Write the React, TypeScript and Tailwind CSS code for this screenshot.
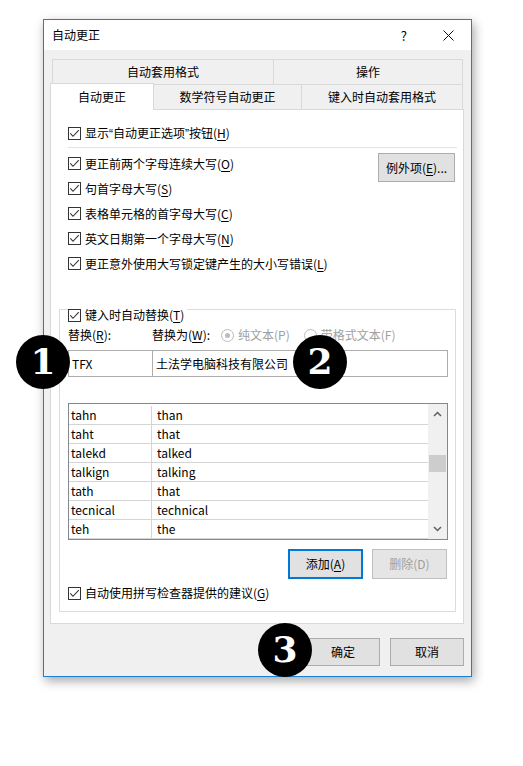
import type { ReactNode } from 'react'

const rows = [
  ['tahn', 'than'],
  ['taht', 'that'],
  ['talekd', 'talked'],
  ['talkign', 'talking'],
  ['tath', 'that'],
  ['tecnical', 'technical'],
  ['teh', 'the'],
]

function Check({ children, h = 'h-[18px]' }: { children: ReactNode; h?: string }) {
  return (
    <div className={`flex items-center ${h}`}>
      <span className="w-[13px] h-[13px] border border-[#333333] bg-white flex items-center justify-center shrink-0">
        <svg width="11" height="11" viewBox="0 0 11 11">
          <path d="M1.3 5.4 L4 8.3 L9.8 2.2" fill="none" stroke="#333333" strokeWidth="1.1" />
        </svg>
      </span>
      <span className="ml-[4px] whitespace-nowrap">{children}</span>
    </div>
  )
}

function Key({ k }: { k: string }) {
  return <>(<u className="underline-offset-2">{k}</u>)</>
}

function Radio({ on }: { on?: boolean }) {
  return (
    <span className="w-[13px] h-[13px] rounded-full border border-[#bcbcbc] bg-white flex items-center justify-center shrink-0">
      {on && <span className="w-[5px] h-[5px] rounded-full bg-[#bcbcbc]" />}
    </span>
  )
}

function Badge({ n, pos }: { n: string; pos: string }) {
  return (
    <div className={`absolute ${pos} w-[54px] h-[54px] rounded-full bg-black flex items-center justify-center`}>
      <span className="text-white font-['DejaVu_Serif',serif] font-bold text-[36px] leading-none -mt-[2px]">{n}</span>
    </div>
  )
}

export default function App() {
  return (
    <div className="relative w-[523px] h-[766px] bg-white pt-[19px] pl-[43px] font-['Noto_Sans_CJK_SC','Noto_Sans',sans-serif] text-[12px] text-black leading-none">
      <div className="w-[429px] h-[658px] border border-[#1c7fd6] bg-[#f0f0f0] shadow-[2px_4px_10px_rgba(0,0,0,0.35)] flex flex-col">
        {/* title bar */}
        <div className="h-[30px] bg-white flex items-center pl-[8px]">
          <span>自动更正</span>
          <span className="ml-auto text-[13px]">?</span>
          <span className="ml-[36px] mr-[17px]">
            <svg width="11" height="11" viewBox="0 0 11 11">
              <path d="M0.5 0.5 L10.5 10.5 M10.5 0.5 L0.5 10.5" stroke="#111" strokeWidth="1" />
            </svg>
          </span>
        </div>

        {/* tabs */}
        <div className="mt-[9px] ml-[8px] flex h-[25px] w-[411px]">
          <div className="w-[222px] border-t border-l border-r border-[#d9d9d9] flex items-center justify-center">自动套用格式</div>
          <div className="flex-1 border-t border-r border-[#d9d9d9] flex items-center justify-center">操作</div>
        </div>
        <div className="ml-[6px] flex items-start h-[25px] w-[413px]">
          <div className="relative z-10 -mt-px h-[27px] w-[104px] bg-white border-l border-t border-r border-[#d9d9d9] flex items-center justify-center">自动更正</div>
          <div className="h-[25px] w-[148px] border-t border-r border-[#d9d9d9] flex items-center justify-center">数学符号自动更正</div>
          <div className="h-[25px] flex-1 border-t border-r border-[#d9d9d9] flex items-center justify-center">键入时自动套用格式</div>
        </div>

        {/* panel */}
        <div className="ml-[6px] w-[414px] h-[515px] bg-white border border-[#d9d9d9] pt-[13px]">
          <div className="ml-[17px]">
            <Check h="h-[20px]">
              显示<span className="font-['Liberation_Sans',sans-serif]">“</span>自动更正选项<span className="font-['Liberation_Sans',sans-serif]">”</span>按钮<Key k="H" />
            </Check>
          </div>
          <div className="mt-[4px] ml-[17px] mr-[6px] h-px bg-[#e3e3e3]" />

          <div className="mt-[3px] flex">
            <div className="ml-[17px] flex flex-col">
              {[
                ['更正前两个字母连续大写', 'O'],
                ['句首字母大写', 'S'],
                ['表格单元格的首字母大写', 'C'],
                ['英文日期第一个字母大写', 'N'],
                ['更正意外使用大写锁定键产生的大小写错误', 'L'],
              ].map(([t, k]) => (
                <Check key={t} h="h-[25px]">
                  {t}<Key k={k} />
                </Check>
              ))}
            </div>
            <button className="ml-auto mr-[8px] mt-[2px] w-[77px] h-[29px] border border-[#adadad] bg-[#e1e1e1] flex items-center justify-center">
              例外项<Key k="E" />...
            </button>
          </div>

          {/* replace group */}
          <div className="mt-[33px] ml-[8px] mr-[7px] border border-[#dcdcdc] pb-[9px]">
            <div className="-mt-[2px] ml-[8px] w-fit bg-white pr-[3px]">
              <Check h="h-[14px]">
                键入时自动替换<Key k="T" />
              </Check>
            </div>
            <div className="mt-[4px] ml-[8px] h-[18px] flex items-center">
              <span className="w-[84px]">替换<Key k="R" />:</span>
              <span>替换为<Key k="W" />:</span>
              <span className="ml-[11px]"><Radio on /></span>
              <span className="ml-[4px] text-[#a0a0a0]">纯文本(P)</span>
              <span className="ml-[14px]"><Radio /></span>
              <span className="ml-[4px] text-[#a0a0a0]">带格式文本(F)</span>
            </div>
            <div className="mt-[6px] ml-[8px] mr-[7px] h-[27px] flex">
              <div className="w-[85px] border border-[#adadad] pl-[3px] flex items-center">TFX</div>
              <div className="flex-1 border border-l-0 border-[#adadad] pl-[3px] flex items-center">土法学电脑科技有限公司</div>
            </div>

            <div className="mt-[26px] ml-[8px] mr-[7px] h-[137px] border border-[#828790] flex">
              <div className="flex-1 pt-[2px]">
                {rows.map(([a, b], i) => (
                  <div key={i} className="h-[19px] flex border-b border-[#d5d5d5]">
                    <div className="w-[83px] border-r border-[#d5d5d5] pl-[2px] flex items-center">{a}</div>
                    <div className="pl-[5px] flex items-center">{b}</div>
                  </div>
                ))}
              </div>
              <div className="w-[19px] bg-[#f0f0f0] flex flex-col">
                <div className="h-[20px] flex items-center justify-center">
                  <svg width="9" height="6" viewBox="0 0 9 6">
                    <path d="M1 5 L4.5 1.5 L8 5" fill="none" stroke="#606060" strokeWidth="1.5" />
                  </svg>
                </div>
                <div className="mt-[31px] mx-[1px] h-[17px] bg-[#cdcdcd]" />
                <div className="flex-1" />
                <div className="h-[20px] flex items-center justify-center">
                  <svg width="9" height="6" viewBox="0 0 9 6">
                    <path d="M1 1 L4.5 4.5 L8 1" fill="none" stroke="#606060" strokeWidth="1.5" />
                  </svg>
                </div>
              </div>
            </div>

            <div className="mt-[9px] mr-[8px] flex justify-end gap-[9px]">
              <button className="w-[75px] h-[30px] border-2 border-[#0078d7] bg-[#e1e1e1] flex items-center justify-center">
                添加<Key k="A" />
              </button>
              <button className="w-[75px] h-[30px] border border-[#bfbfbf] bg-[#e5e5e5] text-[#a0a0a0] flex items-center justify-center">
                删除(D)
              </button>
            </div>

            <div className="mt-[5px] ml-[8px]">
              <Check>
                自动使用拼写检查器提供的建议<Key k="G" />
              </Check>
            </div>
          </div>
        </div>

        {/* footer */}
        <div className="pt-[14px] pr-[7px] flex justify-end gap-[10px]">
          <button className="w-[74px] h-[28px] border border-[#adadad] bg-[#e1e1e1] flex items-center justify-center">确定</button>
          <button className="w-[74px] h-[28px] border border-[#adadad] bg-[#e1e1e1] flex items-center justify-center">取消</button>
        </div>
      </div>

      <Badge n="1" pos="left-[16px] top-[335px]" />
      <Badge n="2" pos="left-[293px] top-[335px]" />
      <Badge n="3" pos="left-[258px] top-[623px]" />
    </div>
  )
}
